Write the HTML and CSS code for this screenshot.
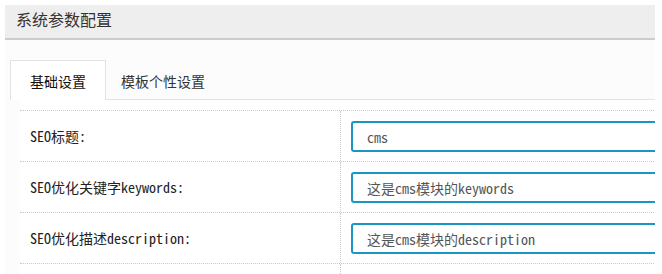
FILE: index.html
```html
<!DOCTYPE html>
<html lang="zh-CN">
<head>
    <meta charset="UTF-8">
    <meta name="viewport" content="width=device-width, initial-scale=1.0">
    <title>系统参数配置</title>
    <link rel="stylesheet" href="styles.css">
</head>
<body>
    <div class="page">
        <div class="page-header">系统参数配置</div>
        <div class="panel">
            <ul class="tabs">
                <li class="tab active">基础设置</li>
                <li class="tab">模板个性设置</li>
            </ul>
            <div class="form-box">
                <div class="form-row">
                    <div class="form-label">SEO标题:</div>
                    <div class="form-field"><input type="text" value="cms"></div>
                </div>
                <div class="form-row">
                    <div class="form-label">SEO优化关键字keywords:</div>
                    <div class="form-field"><input type="text" value="这是cms模块的keywords"></div>
                </div>
                <div class="form-row">
                    <div class="form-label">SEO优化描述description:</div>
                    <div class="form-field"><input type="text" value="这是cms模块的description"></div>
                </div>
                <div class="form-row">
                    <div class="form-label"></div>
                    <div class="form-field"></div>
                </div>
            </div>
        </div>
    </div>
</body>
</html>
```

FILE: styles.css
```css
/* Reset */
* {
    margin: 0;
    padding: 0;
    box-sizing: border-box;
}

body {
    background: #fff;
    color: #333;
    font-family: "Noto Sans CJK SC", sans-serif;
    font-size: 14px;
}

.page {
    margin: 5px;
    width: 650px;
    overflow: hidden;
}

/* Header */
.page-header {
    height: 35px;
    background: #eeeeee;
    border-bottom: 2px solid #cccccc;
    padding: 0 11px;
    font-size: 16px;
    line-height: 28px;
    color: #333;
}

/* Tabs */
.panel {
    background: #fcfcfc;
    padding-top: 20px;
    height: 240px;
}

.tabs {
    list-style: none;
    display: flex;
    margin: 0 0 0 5px;
    border-bottom: 1px solid #e3e3e3;
}

.tab {
    height: 40px;
    line-height: 40px;
    padding: 0 14px;
    border: 1px solid transparent;
    border-bottom: none;
    color: #333;
    margin-bottom: -1px;
}

.tab.active {
    padding: 0 19px;
    background: #fff;
    border-color: #e3e3e3;
    color: #111;
}

/* Form table */
.form-box {
    margin-left: 15px;
    padding-top: 10px;
    background: #fff;
    width: 700px;
    font-family: "Noto Sans Mono CJK SC", "Liberation Mono", monospace;
}

.form-row {
    display: flex;
    height: 51px;
    border-top: 1px dotted #c8c8c8;
}

.form-label {
    flex: 0 0 321px;
    padding-left: 10px;
    line-height: 50px;
    color: #222;
    border-right: 1px dotted #c8c8c8;
}

.form-field {
    flex: 1;
    padding: 10px 0 0 10px;
}

.form-field input {
    width: 420px;
    height: 31px;
    border: 2px solid #1a96c4;
    border-radius: 3px;
    padding: 0 14px;
    font-family: inherit;
    font-size: 14px;
    color: #555;
    background: #fff;
    outline: none;
}
```
